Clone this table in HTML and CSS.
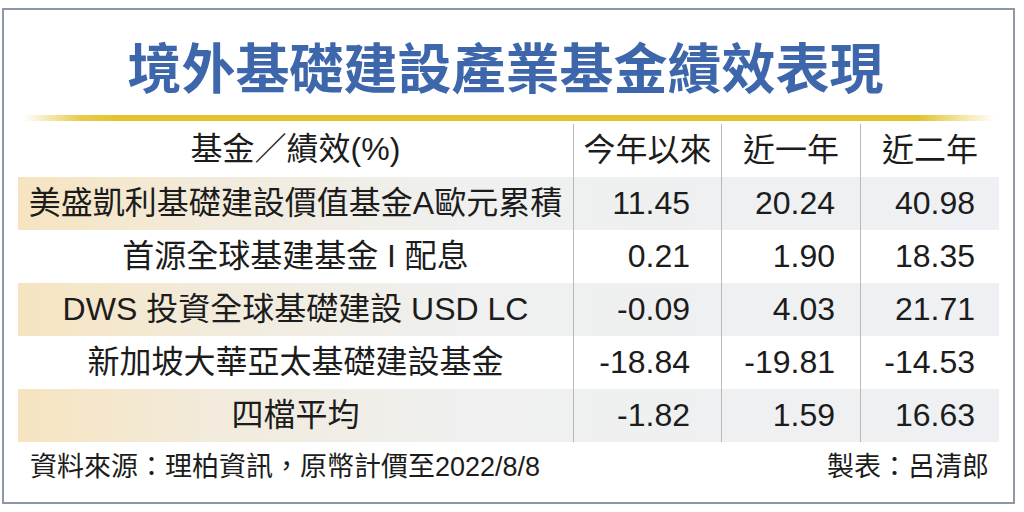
FILE: index.html
```html
<!DOCTYPE html>
<html lang="zh-Hant">
<head>
<meta charset="utf-8">
<title>境外基礎建設產業基金績效表現</title>
<link rel="stylesheet" href="styles.css">
</head>
<body>
<div class="frame">
  <h1 class="title">境外基礎建設產業基金績效表現</h1>
  <div class="rule"></div>
  <div class="table">
    <div class="row head">
      <div class="cell name">基金／績效(%)</div>
      <div class="cell">今年以來</div>
      <div class="cell">近一年</div>
      <div class="cell">近二年</div>
    </div>
    <div class="row stripe">
      <div class="cell name">美盛凱利基礎建設價值基金A歐元累積</div>
      <div class="cell num c2">11.45</div>
      <div class="cell num c3">20.24</div>
      <div class="cell num c4">40.98</div>
    </div>
    <div class="row">
      <div class="cell name">首源全球基建基金 I 配息</div>
      <div class="cell num c2">0.21</div>
      <div class="cell num c3">1.90</div>
      <div class="cell num c4">18.35</div>
    </div>
    <div class="row stripe">
      <div class="cell name">DWS 投資全球基礎建設 USD LC</div>
      <div class="cell num c2">-0.09</div>
      <div class="cell num c3">4.03</div>
      <div class="cell num c4">21.71</div>
    </div>
    <div class="row">
      <div class="cell name">新加坡大華亞太基礎建設基金</div>
      <div class="cell num c2">-18.84</div>
      <div class="cell num c3">-19.81</div>
      <div class="cell num c4">-14.53</div>
    </div>
    <div class="row stripe">
      <div class="cell name">四檔平均</div>
      <div class="cell num c2">-1.82</div>
      <div class="cell num c3">1.59</div>
      <div class="cell num c4">16.63</div>
    </div>
    <div class="footer">
      <span>資料來源：理柏資訊，原幣計價至2022/8/8</span>
      <span>製表：呂清郎</span>
    </div>
  </div>
</div>
</body>
</html>
```

FILE: styles.css
```css
html, body {
  margin: 0;
  padding: 0;
  background: #ffffff;
}

body {
  font-family: "Liberation Sans", "Noto Sans CJK TC", sans-serif;
  color: #1c1c1c;
}

.frame {
  box-sizing: border-box;
  width: 1013px;
  height: 496px;
  margin: 8px 0 0 2px;
  border: 2px solid #8e97a6;
  background: #ffffff;
}

.title {
  margin: 0;
  padding-top: 26px;
  height: 77px;
  box-sizing: border-box;
  font-family: "Noto Sans CJK TC", sans-serif;
  font-weight: 700;
  font-size: 54px;
  line-height: 60px;
  color: #3e66ab;
  text-align: center;
  text-indent: -6px;
  white-space: nowrap;
}

.rule {
  height: 6px;
  margin: 28px 18px 0 19px;
  background: linear-gradient(to right,
    rgba(227, 194, 44, 0) 0%,
    rgba(227, 194, 44, 0.85) 6%,
    #e3c22c 10%,
    #e3c22c 92%,
    rgba(227, 194, 44, 0) 100%);
}

.table {
  margin: 0 14px 0 14px;
}

.row {
  display: grid;
  grid-template-columns: 555px 148px 139px 139px;
  height: 53px;
  font-size: 32px;
  line-height: 53px;
}

.row.head {
  height: 56px;
  line-height: 56px;
}

.row.stripe {
  background: linear-gradient(to right,
    #f6e4c0 0%,
    #f2ebdc 20%,
    #eff0ef 45%,
    #eef0f3 100%);
}

.cell {
  white-space: nowrap;
  text-align: center;
}

.cell + .cell {
  border-left: 1px solid #b9b9b9;
}

.row.head .cell + .cell {
  margin-top: 3px;
  line-height: 53px;
}

.num {
  text-align: right;
}

.num.c2 { padding-right: 31px; }
.num.c3 { padding-right: 25px; }
.num.c4 { padding-right: 24px; }

.footer {
  display: flex;
  justify-content: space-between;
  padding: 10px 10px 0 12px;
  font-size: 27px;
  line-height: 30px;
}
```
